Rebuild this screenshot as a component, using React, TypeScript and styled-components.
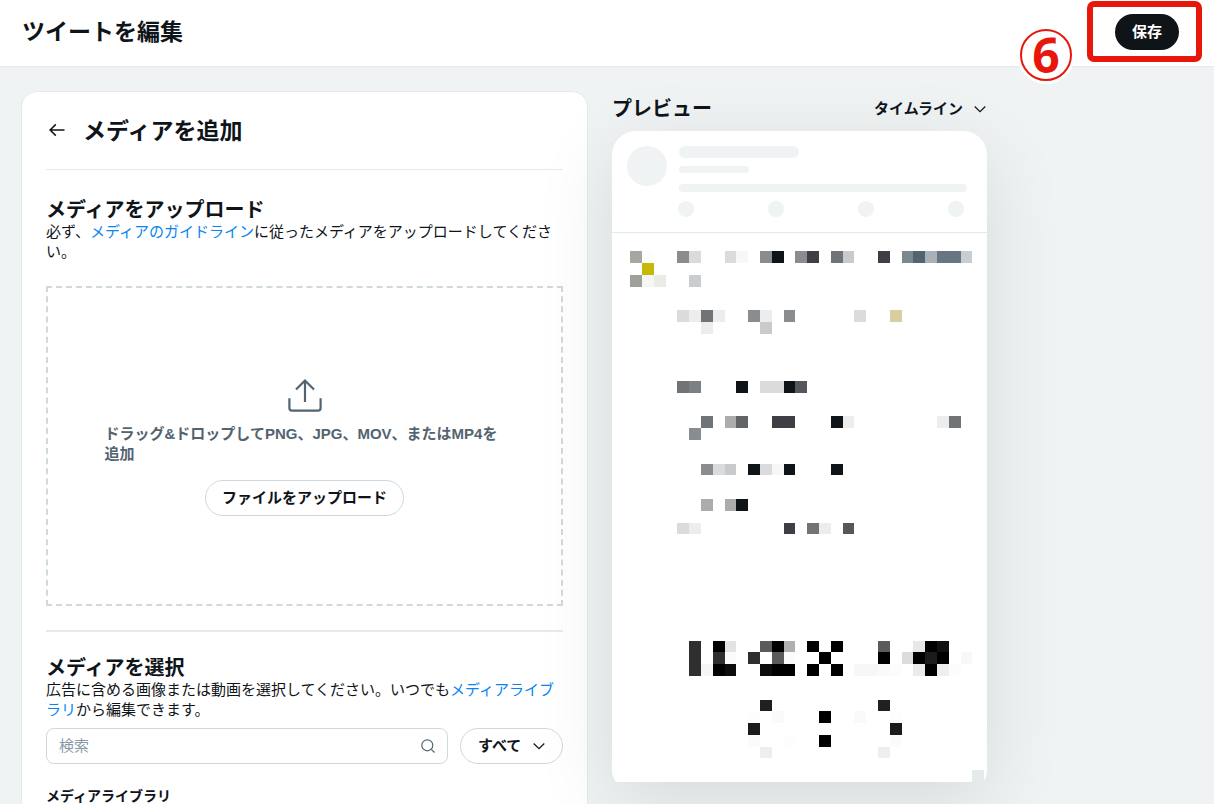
import React from "react";
import styled, { createGlobalStyle } from "styled-components";

const GlobalStyle = createGlobalStyle`
  *, *::before, *::after { box-sizing: border-box; }
  body {
    margin: 0;
    overflow: hidden;
    background: #eff3f4;
    color: #0f1419;
    font-family: "Liberation Sans", "Noto Sans CJK JP", sans-serif;
    font-size: 15px;
    line-height: 20px;
  }
  h1, h2, h3, h4, p { margin: 0; }
  button, input, select { font: inherit; color: inherit; }
`;

const Page = styled.div`
  height: 100vh;
  overflow: hidden;
`;

const Header = styled.header`
  position: relative;
  display: flex;
  justify-content: space-between;
  align-items: flex-start;
  height: 67px;
  padding: 14px 35px 0 22px;
  background: #fff;
  border-bottom: 1px solid #e6e9eb;
`;

const PageTitle = styled.h1`
  font-size: 23px;
  line-height: 36px;
  font-weight: 700;
`;

const SaveArea = styled.div`
  position: relative;
`;

const SaveButton = styled.button`
  display: block;
  width: 64px;
  height: 36px;
  padding: 0;
  border: 0;
  border-radius: 18px;
  background: #0f1419;
  color: #fff;
  font-weight: 700;
`;

const Highlight = styled.span`
  position: absolute;
  inset: -13px -23px -12px -28px;
  border: 6px solid #e7180b;
  border-radius: 7px;
  pointer-events: none;
`;

const StepBadge = styled.span`
  position: absolute;
  z-index: 2;
  top: 29px;
  right: 142px;
  display: flex;
  align-items: center;
  justify-content: center;
  width: 52px;
  height: 52px;
  border: 2px solid #e7180b;
  border-radius: 50%;
  background: #fff;
  box-shadow: 0 0 0 3px #fff;
  color: #e7180b;
  font-family: "Noto Sans", sans-serif;
  font-size: 48px;
  line-height: 46px;
  font-weight: 700;
`;

const Main = styled.main`
  display: grid;
  grid-template-columns: minmax(0, 567px) minmax(0, 375px);
  column-gap: 24px;
  align-items: start;
  padding: 24px 21px 0;
`;

const Panel = styled.section`
  padding: 24px 24px 80px;
  border: 1px solid #e6e9eb;
  border-radius: 16px;
  background: #fff;
`;

const PanelHeader = styled.div`
  display: flex;
  align-items: center;
  gap: 15px;
  height: 29px;
`;

const IconButton = styled.button`
  display: flex;
  padding: 0;
  border: 0;
  background: none;
`;

const PanelTitle = styled.h2`
  font-size: 23px;
  line-height: 28px;
  font-weight: 700;
`;

const Divider = styled.hr<{ $size: number }>`
  height: ${(p) => p.$size}px;
  margin: 24px 0;
  border: 0;
  background: #e6eaec;
`;

const SectionTitle = styled.h3`
  font-size: 20px;
  line-height: 24px;
  font-weight: 700;
`;

const UploadSection = styled.section`
  padding-top: 4px;
`;

const Link = styled.a`
  color: #0a84f0;
  text-decoration: none;
`;

const DropZone = styled.div`
  display: flex;
  flex-direction: column;
  align-items: center;
  justify-content: center;
  height: 320px;
  margin-top: 24px;
  border: 2px dashed #cfd9de;
`;

const DropText = styled.p`
  width: 100%;
  max-width: 400px;
  margin: 8px 0 16px;
  color: #536471;
  font-weight: 700;
`;

const OutlineButton = styled.button`
  height: 36px;
  padding: 0 16px;
  border: 1px solid #cfd9de;
  border-radius: 18px;
  background: transparent;
  font-weight: 700;
`;

const Filters = styled.div`
  display: flex;
  gap: 12px;
  margin-top: 8px;
`;

const SearchBox = styled.label`
  display: flex;
  flex: 1;
  align-items: center;
  height: 36px;
  padding: 0 12px;
  border: 1px solid #cfd9de;
  border-radius: 8px;
`;

const SearchInput = styled.input`
  flex: 1;
  min-width: 0;
  padding: 0;
  border: 0;
  outline: 0;
  background: transparent;
  &::placeholder { color: #8899a6; opacity: 1; }
`;

const SelectBox = styled.div<{ $outlined?: boolean }>`
  display: grid;
  align-items: center;
  height: ${(p) => (p.$outlined ? 36 : 34)}px;
  border: ${(p) => (p.$outlined ? "1px solid #cfd9de" : "0")};
  border-radius: 18px;

  select {
    grid-area: 1 / 1;
    height: 100%;
    padding: ${(p) => (p.$outlined ? "0 38px 0 17px" : "0 22px 0 0")};
    border: 0;
    outline: 0;
    appearance: none;
    background: transparent;
    font-weight: 700;
  }
  svg {
    grid-area: 1 / 1;
    justify-self: end;
    margin-right: ${(p) => (p.$outlined ? 17 : 1)}px;
    pointer-events: none;
  }
`;

const ListTitle = styled.h4`
  margin-top: 22px;
  font-size: 14px;
  line-height: 20px;
  font-weight: 700;
`;

const PreviewHeader = styled.div`
  display: flex;
  align-items: center;
  justify-content: space-between;
  height: 36px;
  margin-bottom: 4px;
`;

const PreviewCard = styled.article`
  overflow: hidden;
  border-radius: 24px 24px 6px 6px / 24px 24px 12px 12px;
  background: #fff;
  box-shadow: 0 20px 80px rgba(0, 0, 0, 0.1);
`;

const Skeleton = styled.div`
  display: flex;
  gap: 12px;
  padding: 15px 20px 15px 15px;
  border-bottom: 1px solid #e3e9ec;
`;

const Dot = styled.span<{ $size: number }>`
  flex: none;
  width: ${(p) => p.$size}px;
  height: ${(p) => p.$size}px;
  border-radius: 50%;
  background: #eff3f4;
`;

const Lines = styled.div`
  flex: 1;
`;

const Line = styled.div<{ $width: string; $height: number; $gap: number }>`
  width: ${(p) => p.$width};
  height: ${(p) => p.$height}px;
  margin-bottom: ${(p) => p.$gap}px;
  border-radius: 6px;
  background: #eff3f4;
`;

const Dots = styled.div`
  display: flex;
  justify-content: space-between;
  margin-left: -1px;
  padding-right: 3px;
`;

const Mosaic = styled.svg`
  display: block;
  width: 100%;
`;

const Chevron = () => (
  <svg width="12" height="12" viewBox="0 0 12 12" fill="none" stroke="#0f1419" strokeWidth="1.2" aria-hidden="true">
    <path d="M0.7 3.5 6 8.6l5.3-5.1" />
  </svg>
);

/* Column edges of the pixelated post; the cells refer to them by index. */
const edges = [
  18, 30, 42, 54, 65, 77, 89, 101, 113, 124, 136, 148, 160, 172, 183, 195, 207,
  219, 231, 242, 254, 266, 278, 290, 301, 313, 325, 337, 349, 360, 372,
];

type Row = [y: number, height: number, cells: Record<number, string>];

const rows: Row[] = [
  [18, 12, { 0: "#a8a6a1", 1: "#fbfefd", 4: "#8a8d90", 5: "#dadbdd", 8: "#dadbdd", 9: "#f7f7f7", 11: "#8a8d90", 12: "#0f1419", 14: "#8a8d90", 15: "#3d3f44", 17: "#717477", 18: "#c9cacc", 21: "#3d3f44", 23: "#7c8890", 24: "#536471", 25: "#a9b0b8", 26: "#687684", 27: "#687684", 28: "#c8cdd2" }],
  [30, 12, { 1: "#c7b709" }],
  [42, 12, { 0: "#a09f9b", 1: "#f5f7f5", 2: "#e9ebe6", 5: "#c8cdd2" }],
  [77, 12, { 4: "#dadbdd", 5: "#ededed", 6: "#717477", 7: "#ededed", 10: "#8a8d90", 11: "#ededed", 13: "#8a8d90", 19: "#dadbdd", 22: "#d7d09e" }],
  [89, 12, { 6: "#ededed", 11: "#c9cacc" }],
  [148, 12, { 4: "#717477", 5: "#7d8083", 9: "#0f1419", 11: "#dadbdd", 12: "#dadbdd", 13: "#0f1419", 14: "#54575c" }],
  [183, 12, { 6: "#717477", 8: "#abacae", 9: "#626568", 12: "#3d3f44", 13: "#3d3f44", 17: "#0f1419", 18: "#ededed", 26: "#ededed", 27: "#717477" }],
  [195, 12, { 5: "#8a8d90" }],
  [231, 11, { 6: "#8a8d90", 7: "#dadbdd", 8: "#c9cacc", 10: "#0f1419", 11: "#dadbdd", 12: "#f7f7f7", 13: "#0f1419", 17: "#0f1419" }],
  [266, 12, { 6: "#abacae", 8: "#abacae", 9: "#0f1419" }],
  [290, 11, { 4: "#dadbdd", 5: "#ededed", 13: "#3d3f44", 15: "#717477", 16: "#ededed", 18: "#54575c" }],
  [408, 11, { 5: "#2f2f2f", 7: "#000", 8: "#e3e3e3", 11: "#5b5b5b", 12: "#000", 13: "#b0b0b0", 15: "#000", 17: "#000", 21: "#5b5b5b", 24: "#e8e8e8", 25: "#000", 26: "#111" }],
  [419, 12, { 5: "#2f2f2f", 7: "#2f2f2f", 8: "#fbfbfb", 10: "#2f2f2f", 12: "#5b5b5b", 13: "#fbfbfb", 16: "#000", 21: "#000", 23: "#dcdcdc", 24: "#000", 25: "#1b1b1b", 26: "#000", 28: "#f8f8f8" }],
  [431, 12, { 5: "#2f2f2f", 6: "#f6f6f6", 7: "#000", 8: "#0c0c0c", 11: "#0c0c0c", 12: "#000", 13: "#000", 15: "#000", 17: "#000", 19: "#f7f7f7", 20: "#f7f7f7", 21: "#fafafa", 22: "#fcfcfc", 24: "#ebebeb", 25: "#000", 26: "#efefef", 27: "#fcfcfc" }],
  [467, 11, { 11: "#202020", 21: "#202020" }],
  [478, 12, { 10: "#fdfdfd", 12: "#fafafa", 16: "#000", 19: "#fafafa", 22: "#fdfdfd" }],
  [490, 12, { 10: "#1b1b1b", 22: "#1b1b1b" }],
  [502, 12, { 10: "#fbfbfb", 13: "#fdfdfd", 16: "#000", 22: "#fbfbfb" }],
  [514, 11, { 11: "#eee", 21: "#eee" }],
];

export default function App() {
  return (
    <Page>
      <GlobalStyle />
      <Header>
        <PageTitle>ツイートを編集</PageTitle>
        <StepBadge>6</StepBadge>
        <SaveArea>
          <SaveButton type="button">保存</SaveButton>
          <Highlight />
        </SaveArea>
      </Header>
      <Main>
        <Panel>
          <PanelHeader>
            <IconButton type="button" aria-label="戻る">
              <svg width="22" height="22" viewBox="0 0 22 22" fill="none" stroke="#0f1419" strokeWidth="1.5">
                <path d="M18.5 10H4.5M9.8 4.4 4.1 10l5.7 5.6" />
              </svg>
            </IconButton>
            <PanelTitle>メディアを追加</PanelTitle>
          </PanelHeader>
          <Divider $size={1} />
          <UploadSection>
            <SectionTitle>メディアをアップロード</SectionTitle>
            <p>
              必ず、<Link href="#guidelines">メディアのガイドライン</Link>に従ったメディアをアップロードしてください。
            </p>
            <DropZone>
              <svg width="40" height="40" viewBox="0 0 40 40" fill="none" stroke="#536471" strokeWidth="2.2" aria-hidden="true">
                <path d="M20 26V4.5M11 13.5l9-9 9 9M4.4 22.3v9.7a2.7 2.7 0 0 0 2.7 2.7h25.8a2.7 2.7 0 0 0 2.7-2.7v-9.7" />
              </svg>
              <DropText>ドラッグ&amp;ドロップしてPNG、JPG、MOV、またはMP4を追加</DropText>
              <OutlineButton type="button">ファイルをアップロード</OutlineButton>
            </DropZone>
          </UploadSection>
          <Divider $size={2} />
          <SectionTitle>メディアを選択</SectionTitle>
          <p>
            広告に含める画像または動画を選択してください。いつでも<Link href="#library">メディアライブラリ</Link>から編集できます。
          </p>
          <Filters>
            <SearchBox>
              <SearchInput type="search" placeholder="検索" aria-label="検索" />
              <svg width="14" height="14" viewBox="0 0 14 14" fill="none" stroke="#536471" strokeWidth="1.2" aria-hidden="true">
                <circle cx="6.3" cy="6.3" r="5.5" />
                <path d="m10.3 10.3 3.2 3.2" />
              </svg>
            </SearchBox>
            <SelectBox $outlined>
              <select aria-label="メディアの種類">
                <option>すべて</option>
              </select>
              <Chevron />
            </SelectBox>
          </Filters>
          <ListTitle>メディアライブラリ</ListTitle>
        </Panel>
        <section>
          <PreviewHeader>
            <SectionTitle>プレビュー</SectionTitle>
            <SelectBox>
              <select aria-label="プレビューの表示場所">
                <option>タイムライン</option>
              </select>
              <Chevron />
            </SelectBox>
          </PreviewHeader>
          <PreviewCard>
            <Skeleton>
              <Dot $size={40} />
              <Lines>
                <Line $width="120px" $height={12} $gap={8} />
                <Line $width="70px" $height={7} $gap={11} />
                <Line $width="100%" $height={8} $gap={9} />
                <Dots>
                  <Dot $size={16} />
                  <Dot $size={16} />
                  <Dot $size={16} />
                  <Dot $size={16} />
                </Dots>
              </Lines>
            </Skeleton>
            <Mosaic viewBox="0 0 375 549" shapeRendering="crispEdges" aria-hidden="true">
              {rows.map(([y, height, cells]) =>
                Object.entries(cells).map(([key, fill]) => {
                  const col = Number(key);
                  return (
                    <rect key={`${y}-${col}`} x={edges[col]} y={y} width={edges[col + 1] - edges[col]} height={height} fill={fill} />
                  );
                })
              )}
              <rect x="360" y="537" width="12" height="12" fill="#e5eaeb" />
            </Mosaic>
          </PreviewCard>
        </section>
      </Main>
    </Page>
  );
}
